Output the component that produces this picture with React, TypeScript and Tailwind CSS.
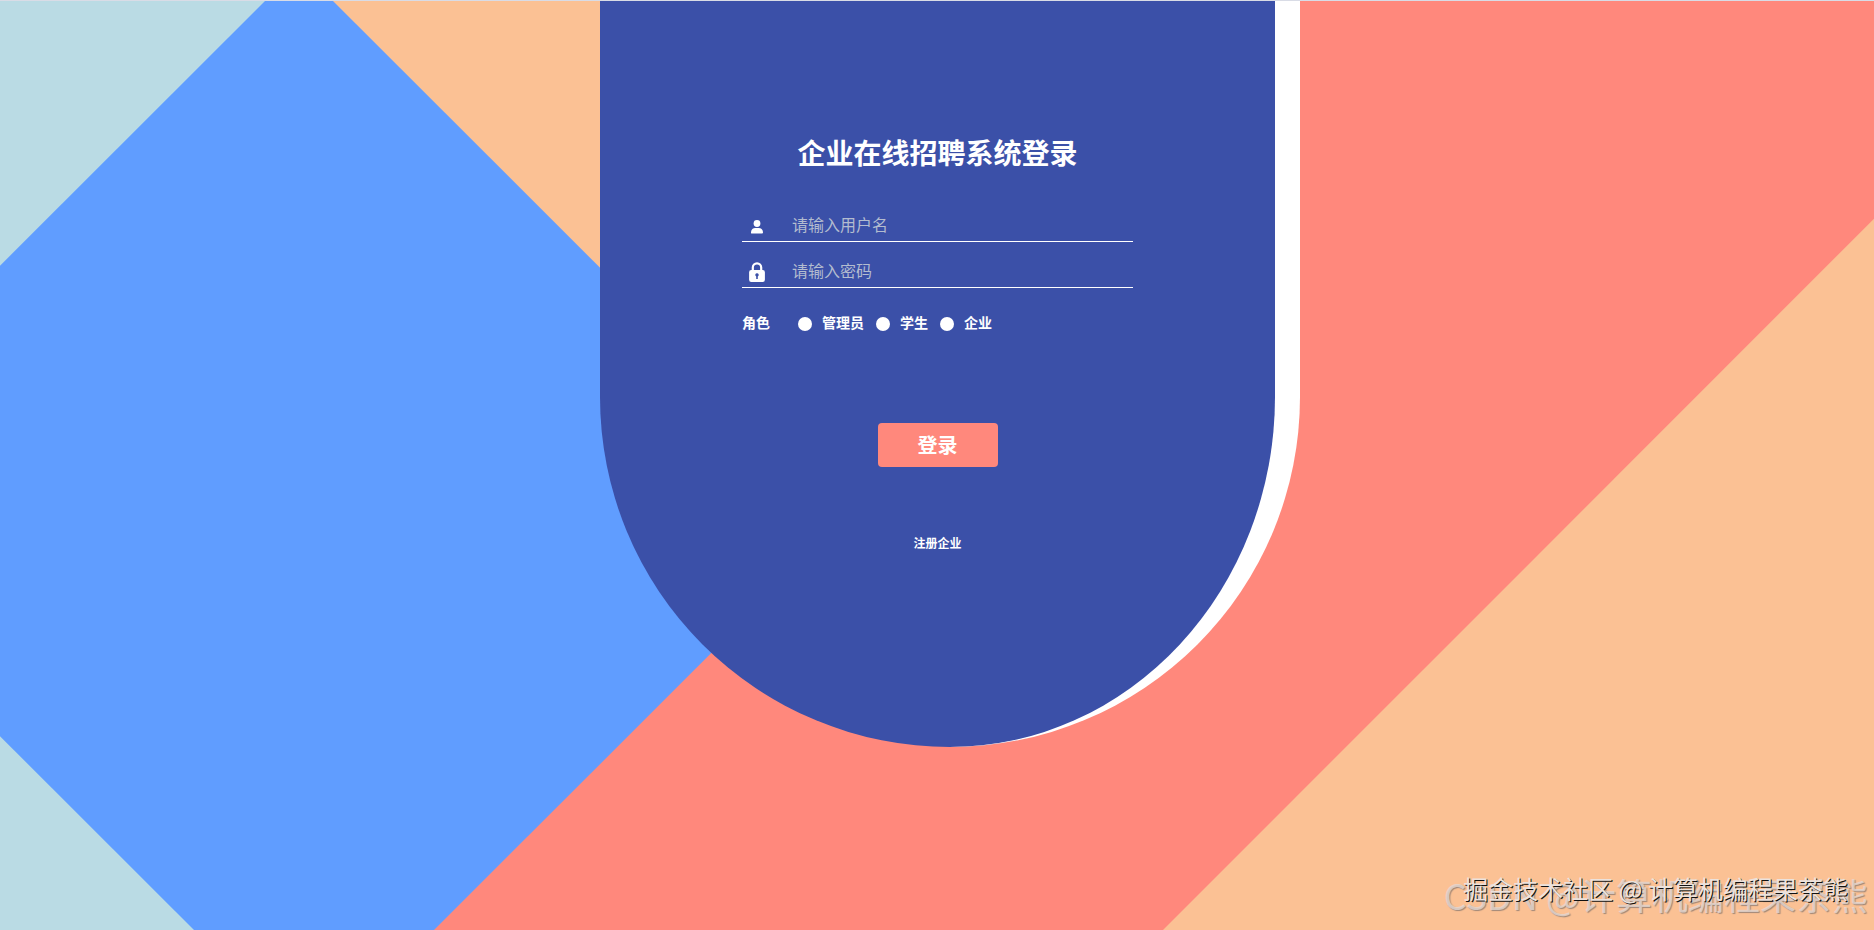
import { useState } from 'react';

const ROLES = ['管理员', '学生', '企业'];

function Backdrop() {
  return (
    <svg
      className="absolute inset-0 -z-10 h-full w-full"
      viewBox="0 0 1874 930"
      preserveAspectRatio="none"
      aria-hidden="true"
    >
      <rect width="1874" height="930" fill="#ff887c" />
      <polygon points="0,0 760,0 760,604 434,930 0,930" fill="#609dff" />
      <polygon points="0,0 265,0 0,265" fill="#badbe4" />
      <polygon points="333,0 700,0 700,367" fill="#fbc194" />
      <polygon points="0,736 194,930 0,930" fill="#badbe4" />
      <polygon points="1874,218 1874,930 1163,930" fill="#fbc194" />
    </svg>
  );
}

function UserIcon() {
  return (
    <svg className="h-5 w-5" viewBox="0 0 20 20" fill="currentColor" aria-hidden="true">
      <circle cx="10" cy="7.5" r="3.4" />
      <path d="M4 17v-.8C4 13.600 6.200 12 8.200 12h3.600C13.800 12 16 13.600 16 16.200v.3q0 1-1 1H5q-1 0-1-.5Z" />
    </svg>
  );
}

function LockIcon() {
  return (
    <svg className="h-5 w-5" viewBox="0 0 20 20" fill="currentColor" aria-hidden="true">
      <path d="M5.800 9V5.600a4.200 4.200 0 0 1 8.400 0V9" fill="none" stroke="currentColor" strokeWidth="2.2" />
      <path
        fillRule="evenodd"
        d="M4.300 8h11.400a2.200 2.200 0 0 1 2.200 2.200v7.600a2.200 2.200 0 0 1-2.200 2.200H4.300a2.200 2.200 0 0 1-2.200-2.200v-7.600A2.200 2.200 0 0 1 4.300 8Zm5.700 3.300a1.700 1.700 0 0 0-.8 3.200V17h1.600v-2.500a1.700 1.700 0 0 0-.8-3.200Z"
      />
    </svg>
  );
}

export default function App() {
  const [username, setUsername] = useState('');
  const [password, setPassword] = useState('');
  const [role, setRole] = useState('');

  return (
    <div className="relative isolate flex min-h-screen flex-col items-center overflow-hidden border-t border-[#d9dce6] font-['Noto_Sans_CJK_SC',sans-serif]">
      <Backdrop />

      <main className="ml-[26px] flex w-full max-w-[700px] justify-center rounded-b-[350px] border-r-[25px] border-white bg-[#3b50a8] pt-[130px] pb-[196px] text-white">
        <form className="flex w-[391px] flex-col" onSubmit={(e) => e.preventDefault()}>
          <h1 className="text-center text-[28px] leading-[42px] font-bold">企业在线招聘系统登录</h1>

          <label className="mt-[37px] flex h-8 items-center border-b border-white pb-1">
            <span className="flex w-[50px] pt-1 pl-[5px]">
              <UserIcon />
            </span>
            <input
              type="text"
              aria-label="用户名"
              placeholder="请输入用户名"
              value={username}
              onChange={(e) => setUsername(e.target.value)}
              className="min-w-0 flex-1 bg-transparent text-base outline-none placeholder:text-[#b3bccf]"
            />
          </label>

          <label className="mt-[14px] flex h-8 items-center border-b border-white pb-1">
            <span className="flex w-[50px] pt-1 pl-[5px]">
              <LockIcon />
            </span>
            <input
              type="password"
              aria-label="密码"
              placeholder="请输入密码"
              value={password}
              onChange={(e) => setPassword(e.target.value)}
              className="min-w-0 flex-1 bg-transparent text-base outline-none placeholder:text-[#b3bccf]"
            />
          </label>

          <fieldset className="mt-6 flex items-center text-sm font-bold">
            <legend className="float-left w-14">角色</legend>
            <div className="flex gap-3">
              {ROLES.map((name) => (
                <label key={name} className="flex items-center gap-[10px]">
                  <input
                    type="radio"
                    name="role"
                    value={name}
                    checked={role === name}
                    onChange={() => setRole(name)}
                    className="mt-[3px] h-[14px] w-[14px] appearance-none rounded-full bg-white checked:border-4 checked:border-white checked:bg-[#ff887c]"
                  />
                  {name}
                </label>
              ))}
            </div>
          </fieldset>

          <button
            type="submit"
            className="mt-[91px] h-11 w-[120px] self-center rounded-sm bg-[#ff887c] text-xl font-bold"
          >
            登录
          </button>

          <a href="#register" className="mt-[68px] self-center text-xs font-bold">
            注册企业
          </a>
        </form>
      </main>

      <p className="absolute right-[6px] bottom-[9px] text-4xl leading-[54px] whitespace-nowrap text-[#e6d9d3]/80 [text-shadow:1px_1px_1px_#a08878]">
        CSDN @计算机编程果茶熊
      </p>
      <p className="absolute right-[26px] bottom-6 text-[25px] leading-9 whitespace-nowrap text-[#ece2dc] [text-shadow:1px_1px_0_#111]">
        掘金技术社区 @ 计算机编程果茶熊
      </p>
    </div>
  );
}
